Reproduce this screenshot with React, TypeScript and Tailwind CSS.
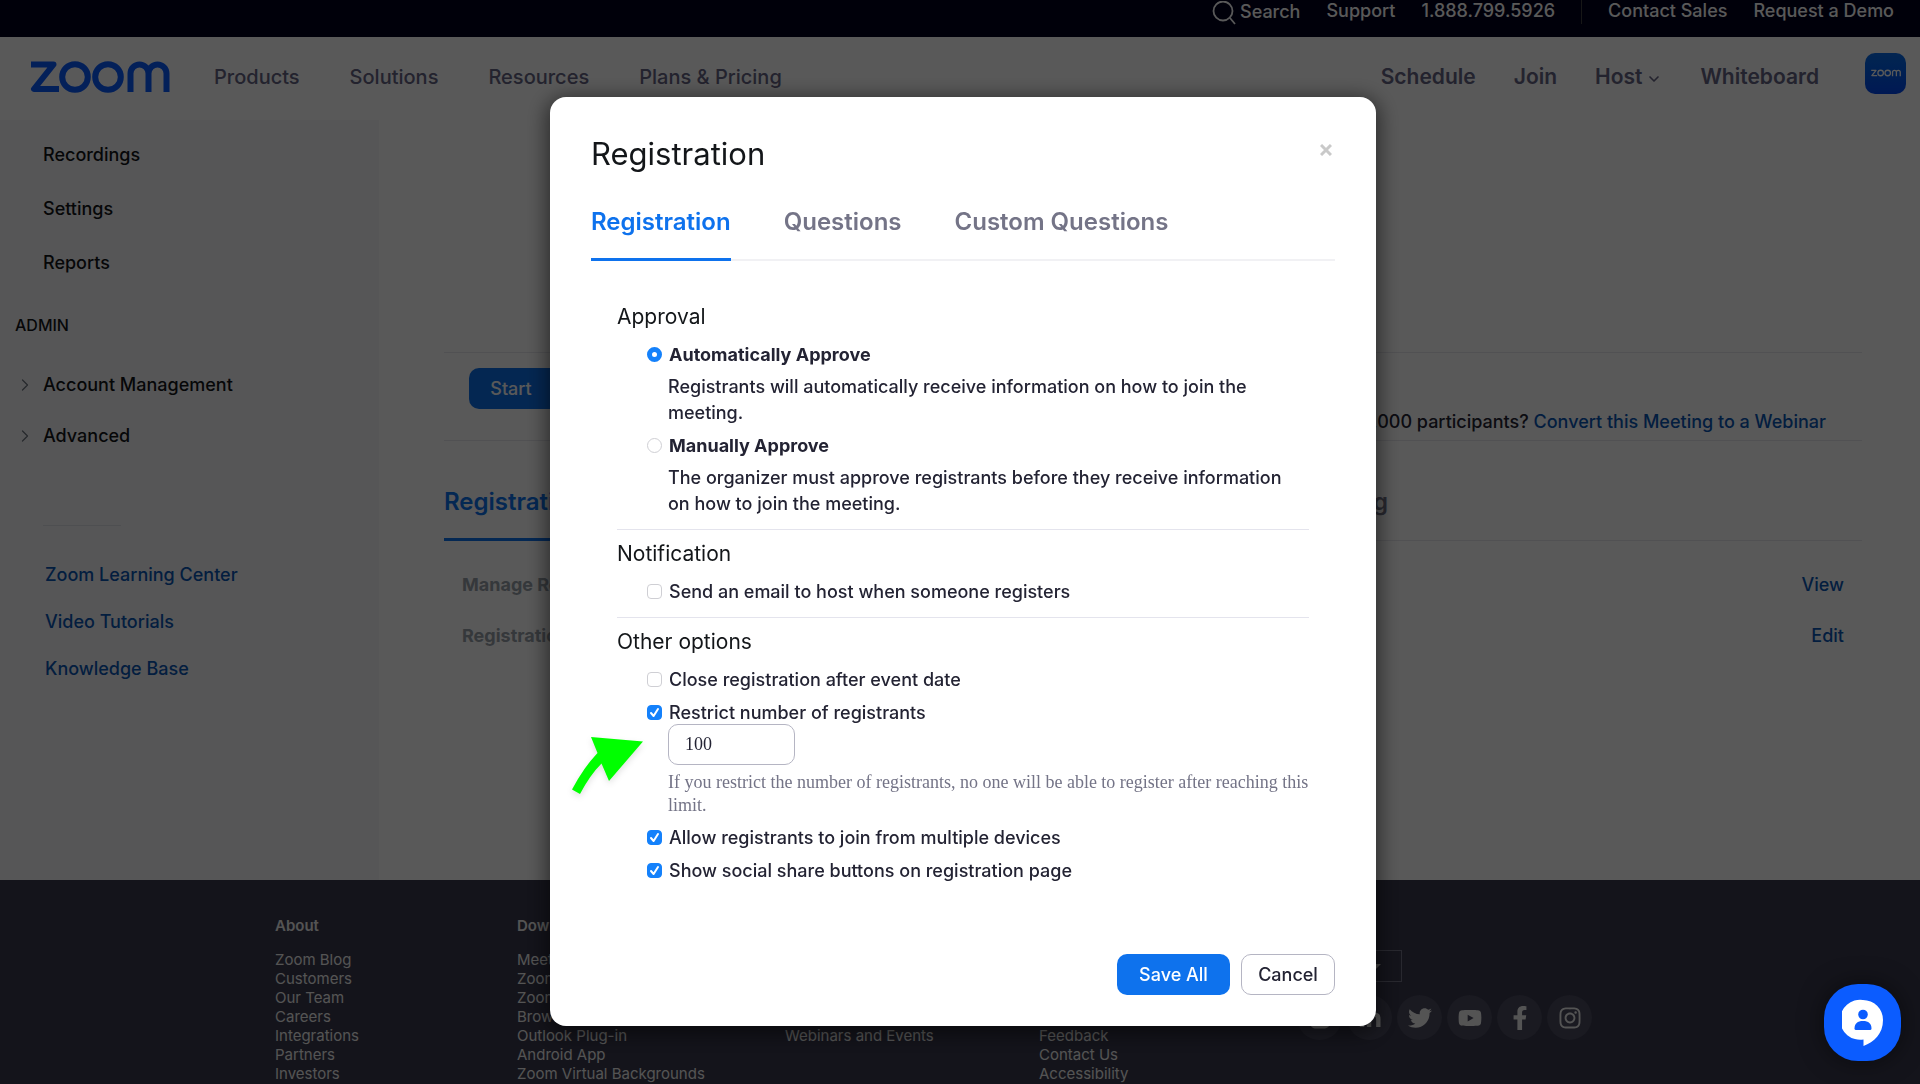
import { useState, type ReactNode } from 'react';
import { FaTwitter, FaYoutube, FaFacebookF, FaInstagram, FaLinkedinIn, FaBloggerB } from 'react-icons/fa';
import { ChevronDown, ChevronRight } from 'lucide-react';

function ZoomLogo({ className }: { className: string }) {
  return (
    <svg viewBox="0 0 140 32" className={className} fill="none" stroke="currentColor" strokeWidth="6" strokeLinejoin="round" role="img" aria-label="zoom">
      <path d="M1 3.5H23.5L4 28H29" />
      <circle cx="45" cy="16" r="12.8" />
      <circle cx="78" cy="16" r="12.8" />
      <path d="M100.500 31V12.500a9 9 0 0 1 18 0V31M118.500 12.500a9 9 0 0 1 18 0V31" />
    </svg>
  );
}

function TopBar() {
  return (
    <div className="flex h-[37px] items-start justify-end bg-[#00001e] pr-[26px] text-lg/[22px] font-medium text-white">
      <a href="#search" className="flex items-start gap-1">
        <svg viewBox="0 0 24 24" className="mt-px size-6" fill="none" stroke="currentColor" strokeWidth="1.8">
          <circle cx="11" cy="10" r="9.500" />
          <path d="M18 17l5 6" />
        </svg>
        <span className="mt-px">Search</span>
      </a>
      <a href="#support" className="ml-[26px]">Support</a>
      <a href="#phone" className="ml-[26px]">1.888.799.5926</a>
      <span className="ml-[26px] h-6 w-px bg-[#444]" />
      <a href="#sales" className="ml-[26px]">Contact Sales</a>
      <a href="#demo" className="ml-[26px]">Request a Demo</a>
    </div>
  );
}

function Header() {
  return (
    <header className="flex h-[83px] items-center justify-between bg-white pr-[14px] pb-[3px] pl-[30px] text-xl text-[#666484]">
      <nav className="flex items-center gap-[50px] font-medium">
        <a href="#home" className="-mr-1.5">
          <ZoomLogo className="h-8 w-[140px] text-[#0b5cff]" />
        </a>
        <a href="#products">Products</a>
        <a href="#solutions">Solutions</a>
        <a href="#resources">Resources</a>
        <a href="#plans">Plans &amp; Pricing</a>
      </nav>
      <nav className="flex items-center gap-[38px] text-[21px] font-semibold">
        <a href="#schedule">Schedule</a>
        <a href="#join">Join</a>
        <a href="#host" className="flex items-center gap-1">
          Host <ChevronDown className="mt-1 size-4" strokeWidth={2.5} />
        </a>
        <a href="#whiteboard">Whiteboard</a>
        <button aria-label="Profile" className="mb-2 ml-2 flex size-[41px] items-center justify-center rounded-[10px] bg-linear-to-b from-[#0b6ce8] to-[#0046ee] text-white">
          <ZoomLogo className="h-2 w-[30px]" />
        </button>
      </nav>
    </header>
  );
}

function Sidebar() {
  return (
    <aside className="w-[379px] shrink-0 bg-[#f7f7fa] pt-[23px] text-lg/6 text-[#131619]">
      <nav className="flex flex-col gap-[30px] pl-[43px] font-medium">
        <a href="#recordings">Recordings</a>
        <a href="#settings">Settings</a>
        <a href="#reports">Reports</a>
      </nav>
      <h2 className="mt-[38px] pl-[15px] text-base/6 font-medium">ADMIN</h2>
      <nav className="mt-9 flex flex-col gap-[27px] pl-[15px] font-medium">
        {['Account Management', 'Advanced'].map((t) => (
          <a key={t} href="#admin" className="flex items-center gap-2">
            <ChevronRight className="size-5 text-[#6e7680]" strokeWidth={1.5} />
            {t}
          </a>
        ))}
      </nav>
      <hr className="mt-[77px] ml-[43px] w-[78px] border-[#dfe3e8]" />
      <nav className="mt-[37px] flex flex-col gap-[23px] pl-[45px] font-medium text-[#0956b5]">
        <a href="#learning">Zoom Learning Center</a>
        <a href="#tutorials">Video Tutorials</a>
        <a href="#kb">Knowledge Base</a>
      </nav>
    </aside>
  );
}

function MeetingPanel() {
  return (
    <main className="min-w-0 grow bg-white pt-[232px] pr-[58px] pl-[65px] text-lg/6 font-medium">
      <section className="flex h-[89px] justify-between border-y border-[#e8e8ee] pt-[15px] pr-9 pl-[25px]">
        <button className="h-[41px] w-[96px] self-start rounded-[10px] bg-[#0e71eb] pr-3 text-white">Start</button>
        <p className="pt-[42px] text-[#232333]">
          Want to have more than 1,000 participants?{' '}
          <a href="#webinar" className="text-[#0956b5]">Convert this Meeting to a Webinar</a>
        </p>
      </section>
      <div className="border-b border-[#e8e8ee] text-2xl/7 font-semibold whitespace-nowrap text-[#747487]">
        <div className="flex h-[99px] w-[944px] items-end justify-between">
          <a href="#registration" className="-mb-px border-b-3 border-[#0e72ed] pb-[22px] text-[#0e72ed]">Registration</a>
          <a href="#email" className="pb-6">Email Settings</a>
          <a href="#branding" className="pb-6">Branding</a>
          <a href="#poll" className="pb-6">Poll/Survey</a>
          <a href="#live" className="pb-6">Live Streaming</a>
        </div>
      </div>
      <dl className="flex flex-col gap-[27px] px-[18px] pt-8">
        <div className="flex justify-between">
          <dt className="font-bold text-[#98a0a9]">Manage Registrants</dt>
          <dd><a href="#view" className="text-[#0956b5]">View</a></dd>
        </div>
        <div className="flex justify-between">
          <dt className="font-bold text-[#98a0a9]">Registration Options</dt>
          <dd><a href="#edit" className="text-[#0956b5]">Edit</a></dd>
        </div>
      </dl>
    </main>
  );
}

const footerColumns = [
  { width: 'w-[242px]', title: 'About', links: ['Zoom Blog', 'Customers', 'Our Team', 'Careers', 'Integrations', 'Partners', 'Investors'] },
  { width: 'w-[268px]', title: 'Download', links: ['Meetings Client', 'Zoom Rooms Client', 'Zoom Rooms Controller', 'Browser Extension', 'Outlook Plug-in', 'Android App', 'Zoom Virtual Backgrounds'] },
  { width: 'w-[254px]', title: 'Sales', links: ['1.888.799.5926', 'Contact Sales', 'Plans & Pricing', 'Request a Demo', 'Webinars and Events'] },
  { width: 'w-[255px]', title: 'Support', links: ['Test Zoom', 'Account', 'Support Center', 'Live Training', 'Feedback', 'Contact Us', 'Accessibility'] },
];

const socials = [
  { name: 'Blog', icon: <FaBloggerB /> },
  { name: 'LinkedIn', icon: <FaLinkedinIn /> },
  { name: 'Twitter', icon: <FaTwitter /> },
  { name: 'YouTube', icon: <FaYoutube /> },
  { name: 'Facebook', icon: <FaFacebookF /> },
  { name: 'Instagram', icon: <FaInstagram /> },
];

function Footer() {
  return (
    <footer className="flex h-[204px] bg-[#39394d] pt-9 pl-[275px] text-[15px]/[19px] text-[#f0f0f0]">
      {footerColumns.map((c) => (
        <section key={c.title} className={c.width}>
          <h3 className="font-semibold">{c.title}</h3>
          <ul className="mt-[15px] whitespace-nowrap">
            {c.links.map((l) => (
              <li key={l}><a href="#footer">{l}</a></li>
            ))}
          </ul>
        </section>
      ))}
      <section>
        <h3 className="font-semibold">Language</h3>
        <button className="mt-[15px] flex h-8 w-[108px] items-center justify-between border border-[#747487] pr-5 pl-3">
          English <span className="border-x-5 border-t-5 border-x-transparent border-t-[#c4c4c4]" />
        </button>
        <div className="mt-[13px] ml-[3px] flex gap-[5px]">
          {socials.map((s) => (
            <a key={s.name} href="#social" aria-label={s.name} className="flex size-[45px] items-center justify-center rounded-full bg-[#4a4a5e] text-2xl">
              {s.icon}
            </a>
          ))}
        </div>
      </section>
    </footer>
  );
}

function Option({ type = 'checkbox', name, checked, onChange, strong, children }: {
  type?: 'checkbox' | 'radio'; name?: string; checked: boolean; onChange: (v: boolean) => void; strong?: boolean; children: ReactNode;
}) {
  const shape = type === 'radio'
    ? 'rounded-full checked:border-[5px]'
    : 'rounded-[4px] checked:bg-[#1481fb]';
  return (
    <label className="flex h-[33px] items-center gap-[7px]">
      <span className="relative flex">
        <input
          type={type}
          name={name}
          checked={checked}
          onChange={(e) => onChange(e.target.checked)}
          className={'size-[15px] appearance-none border border-[#cfcfd4] bg-white checked:border-[#1481fb] ' + shape}
        />
        {type === 'checkbox' && checked && (
          <svg viewBox="0 0 15 15" className="pointer-events-none absolute inset-0 size-[15px]" fill="none" stroke="white" strokeWidth="2" strokeLinecap="round" strokeLinejoin="round">
            <path d="M4 8l2.600 3L11 4" />
          </svg>
        )}
      </span>
      <span className={strong ? 'font-bold' : ''}>{children}</span>
    </label>
  );
}

function RegistrationDialog() {
  const [approval, setApproval] = useState('auto');
  const [notify, setNotify] = useState(false);
  const [close, setClose] = useState(false);
  const [restrict, setRestrict] = useState(true);
  const [limit, setLimit] = useState('100');
  const [devices, setDevices] = useState(true);
  const [share, setShare] = useState(true);

  return (
    <div role="dialog" aria-modal="true" aria-labelledby="dialog-title" className="relative w-[826px] rounded-2xl bg-white px-[41px] pt-9 pb-[31px] text-lg/[26px] font-medium text-[#232333] shadow-[0_4px_20px_4px_rgba(0,0,0,0.5)]">
      <div className="flex items-start justify-between">
        <h1 id="dialog-title" className="text-[31px]/[42px] font-normal text-[#131619]">Registration</h1>
        <button aria-label="Close" className="mt-[11px] mr-[3px] text-[#c9c9c9]">
          <svg viewBox="0 0 12 12" className="size-3" fill="none" stroke="currentColor" strokeWidth="3"><path d="M1 1l10 10M11 1L1 11" /></svg>
        </button>
      </div>
      <div role="tablist" className="mt-[33px] flex gap-[53px] border-b-2 border-[#f1f1f4] text-2xl/7 font-semibold text-[#747487]">
        <button role="tab" aria-selected="true" className="-mb-0.5 border-b-3 border-[#0e72ed] pb-[22px] text-[#0e72ed]">Registration</button>
        <button role="tab" aria-selected="false" className="pb-[23px]">Questions</button>
        <button role="tab" aria-selected="false" className="pb-[23px]">Custom Questions</button>
      </div>
      <form className="px-[26px] pt-[42px]" onSubmit={(e) => e.preventDefault()}>
        <fieldset>
          <legend className="text-[21px]/7 font-normal text-[#131619]">Approval</legend>
          <div className="pt-[7px] pl-[30px]">
            <Option type="radio" name="approval" strong checked={approval === 'auto'} onChange={() => setApproval('auto')}>Automatically Approve</Option>
            <p className="pt-[3px] pb-[3px] pl-[21px]">Registrants will automatically receive information on how to join the meeting.</p>
            <Option type="radio" name="approval" strong checked={approval === 'manual'} onChange={() => setApproval('manual')}>Manually Approve</Option>
            <p className="pt-[3px] pr-4 pl-[21px]">The organizer must approve registrants before they receive information on how to join the meeting.</p>
          </div>
        </fieldset>
        <fieldset className="mt-3 border-t border-[#e4e4ed] pt-2.5">
          <legend className="sr-only">Notification</legend>
          <h2 className="text-[21px]/7 font-normal text-[#131619]">Notification</h2>
          <div className="pt-[7px] pl-[30px]">
            <Option checked={notify} onChange={setNotify}>Send an email to host when someone registers</Option>
          </div>
        </fieldset>
        <fieldset className="mt-[9px] border-t border-[#e4e4ed] pt-2.5">
          <legend className="sr-only">Other options</legend>
          <h2 className="text-[21px]/7 font-normal text-[#131619]">Other options</h2>
          <div className="pt-[7px] pl-[30px]">
            <Option checked={close} onChange={setClose}>Close registration after event date</Option>
            <Option checked={restrict} onChange={setRestrict}>Restrict number of registrants</Option>
            <div className="-mt-[5px] pb-1 pl-[21px] font-['Liberation_Serif',serif] font-normal">
              <input aria-label="Maximum number of registrants" value={limit} onChange={(e) => setLimit(e.target.value)} className="block h-[41px] w-[127px] rounded-[10px] border border-[#b5b5c3] px-4" />
              <p className="pt-1.5 text-lg/[23px] text-[#747487]">If you restrict the number of registrants, no one will be able to register after reaching this limit.</p>
            </div>
            <Option checked={devices} onChange={setDevices}>Allow registrants to join from multiple devices</Option>
            <Option checked={share} onChange={setShare}>Show social share buttons on registration page</Option>
          </div>
        </fieldset>
      </form>
      <div className="mt-[67px] flex justify-end gap-[11px]">
        <button className="h-[41px] w-[113px] rounded-[10px] bg-[#0e72ed] text-white">Save All</button>
        <button className="h-[41px] w-[94px] rounded-[10px] border border-[#b5b5c3]">Cancel</button>
      </div>
      <svg viewBox="0 0 76 66" className="absolute top-[637px] left-[20px] h-[66px] w-[76px] drop-shadow-md" fill="#00ff00" aria-hidden="true">
        <path d="M21 3L73 7.500L39 47L31.500 29.500Q20 41 10 60L2 55.500Q14 33 27.500 19Z" />
      </svg>
    </div>
  );
}

export default function App() {
  return (
    <div className="relative flex h-screen flex-col overflow-hidden bg-white font-['Inter',sans-serif]">
      <TopBar />
      <Header />
      <div className="flex min-h-0 grow">
        <Sidebar />
        <MeetingPanel />
      </div>
      <Footer />
      <div className="fixed inset-0 flex items-start justify-center bg-black/65 pt-[97px] pl-[6px]">
        <RegistrationDialog />
      </div>
      <button aria-label="Chat with support" className="fixed right-[19px] bottom-[23px] flex size-[77px] items-center justify-center rounded-[34px] bg-[#0b5cff] shadow-[0_0_24px_rgba(0,0,0,0.5)]">
        <svg viewBox="0 0 42 48" className="h-12 w-[42px]">
          <path fill="white" d="M21 1a20 20 0 0 1 20 20c0 14-9 22-19.500 26V40.500A20 20 0 1 1 21 1Z" />
          <circle cx="21" cy="15.500" r="4.800" fill="#0b5cff" />
          <path fill="#0b5cff" d="M12.500 29.500c0-5 3-7.500 8.500-7.500s8.500 2.500 8.500 7.500q0 1.500-1.500 1.500H14q-1.500 0-1.500-1.500Z" />
        </svg>
      </button>
    </div>
  );
}
